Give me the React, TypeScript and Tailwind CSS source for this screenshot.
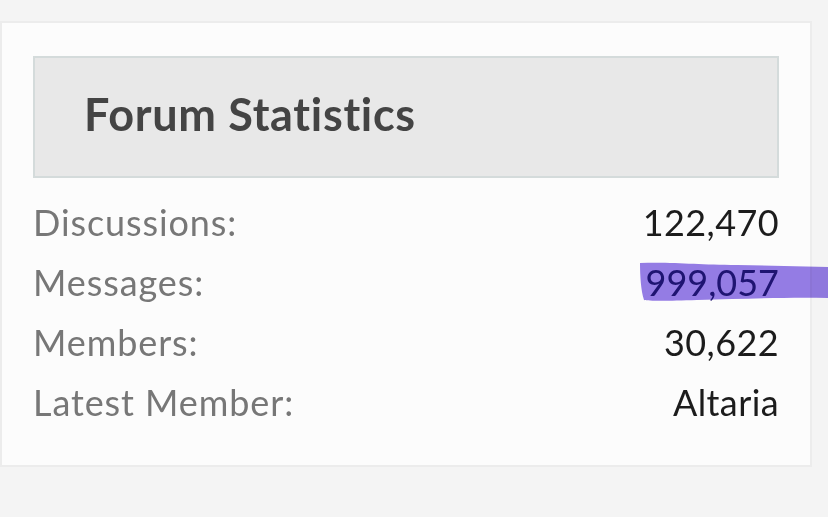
const stats = [
  { label: "Discussions:", value: "122,470" },
  { label: "Messages:", value: "999,057", marked: true },
  { label: "Members:", value: "30,622" },
  { label: "Latest Member:", value: "Altaria" },
];

export default function App() {
  return (
    <div
      className="relative h-[517px] w-full overflow-hidden bg-[#f4f4f4] pt-[21px] pr-[16px]"
      style={{ fontFamily: "Lato, 'Noto Sans', sans-serif" }}
    >
      <div className="border-2 border-[#ececec] bg-[#fcfcfc] px-[31px] pt-[33px] pb-[33px]">
        {/* Header */}
        <div className="flex h-[122px] items-center border-2 border-[#d4dbdb] bg-[#e8e8e8] pl-[49px]">
          <h2 className="pb-[4px] text-[45px] font-bold tracking-[0.7px] text-[#444]">Forum Statistics</h2>
        </div>

        {/* Rows */}
        <dl className="mt-[14px]">
          {stats.map((s) => (
            <div key={s.label} className="flex h-[60px] items-center justify-between text-[36px] leading-none">
              <dt className="tracking-[0.9px] text-[#777]">{s.label}</dt>
              <dd className={s.marked ? "text-[#34287e]" : "tracking-[0.4px] text-[#1c1c1c]"}>{s.value}</dd>
            </div>
          ))}
        </dl>
      </div>

      {/* Highlighter stroke */}
      <svg
        className="pointer-events-none absolute left-[637px] top-[261px] mix-blend-multiply"
        width="191"
        height="42"
        viewBox="0 0 191 42"
      >
        <path
          d="M3 2 C40 1 60 4 100 4 L191 6 L191 37 C150 36 110 38 60 39 C30 40 12 40 7 39 C4 30 3 15 3 2 Z"
          fill="#9076e6"
          opacity="0.95"
        />
      </svg>
    </div>
  );
}
